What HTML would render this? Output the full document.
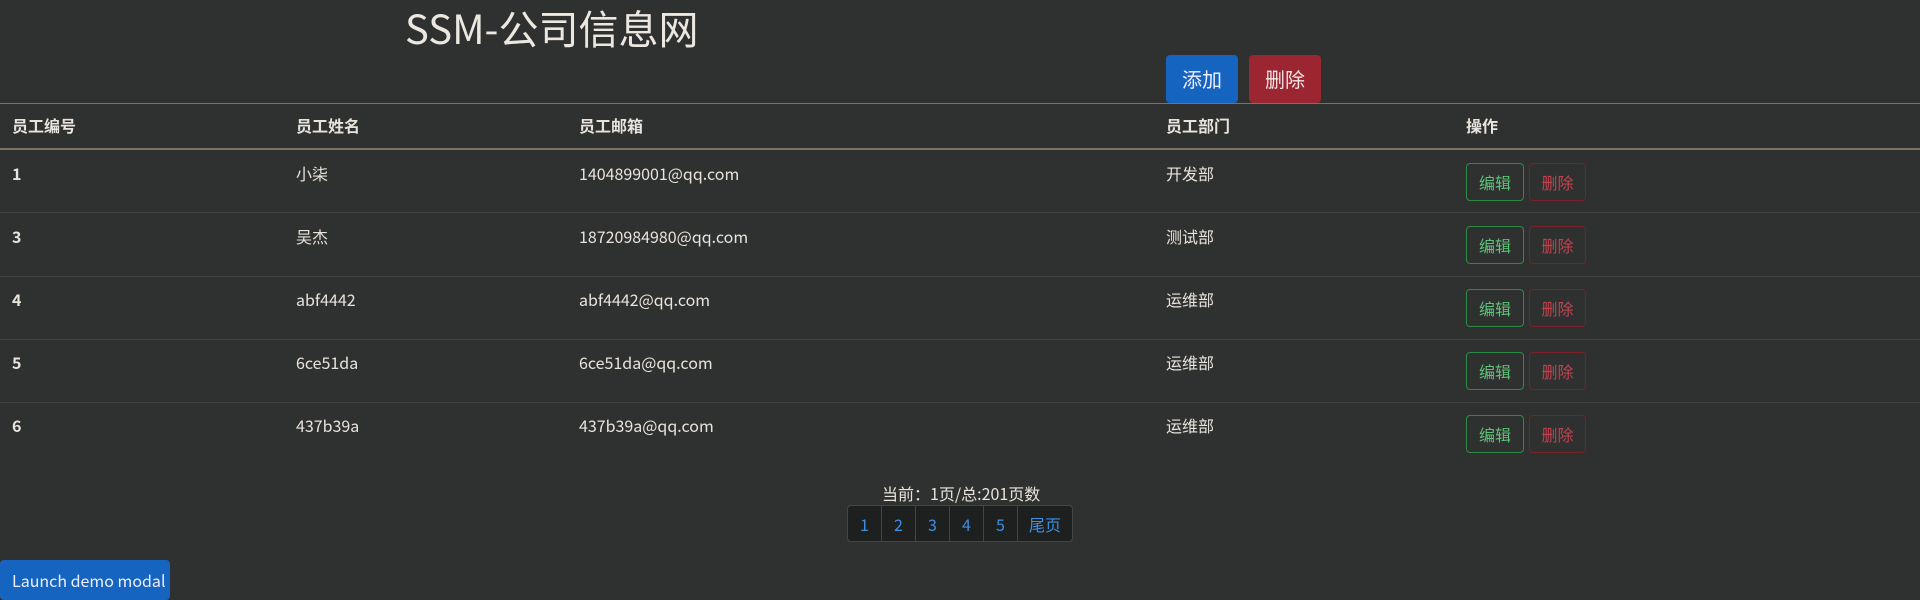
<!DOCTYPE html>
<html><head><meta charset="utf-8"><style>
*{box-sizing:border-box;margin:0;padding:0}
body{width:1920px;height:594px;background:#2f3030;color:#e8e4dc;font-family:"Noto Sans CJK SC","Liberation Sans",sans-serif;font-size:16px;line-height:20px;position:relative;overflow:hidden}
.a{position:absolute;white-space:nowrap}
h1{position:absolute;left:405px;top:0px;font-size:40px;line-height:54px;font-weight:400;color:#ece8e0}
.btn{position:absolute;border-radius:4px;display:flex;align-items:center;justify-content:center}
.line{position:absolute;left:0;width:1920px}
.th{font-weight:bold;top:115px}
.ed{border:1px solid #2e8b45;color:#5cc275}
.dl{border:1px solid #7a2029;color:#c0444f}
.pg{position:absolute;left:847px;top:505px;width:226px;height:37px;border:1px solid #444;border-radius:4px;background:#1e1f1f;display:flex}
.pg div{border-right:1px solid #444;color:#3d8fe0;display:flex;align-items:center;justify-content:center;width:34px}
.pg div:last-child{border:none;flex:1}
</style></head><body>
<h1>SSM-公司信息网</h1>
<div class="btn" style="left:1166px;top:55px;width:72px;height:48px;background:#1565c0;color:#eef;font-size:20px">添加</div>
<div class="btn" style="left:1249px;top:55px;width:72px;height:48px;background:#9b2530;color:#f3e6e6;font-size:20px">删除</div>
<div class="line" style="top:103px;height:1px;background:#7d7262"></div>
<div class="line" style="top:148px;height:2px;background:#7d7262"></div>
<div class="a th" style="left:12px">员工编号</div>
<div class="a th" style="left:296px">员工姓名</div>
<div class="a th" style="left:579px">员工邮箱</div>
<div class="a th" style="left:1166px">员工部门</div>
<div class="a th" style="left:1466px">操作</div>

<div class="line" style="top:212px;height:1px;background:#414241"></div>
<div class="line" style="top:276px;height:1px;background:#414241"></div>
<div class="line" style="top:339px;height:1px;background:#414241"></div>
<div class="line" style="top:402px;height:1px;background:#414241"></div>

<div class="a" style="left:12px;top:163px;font-weight:bold">1</div>
<div class="a" style="left:296px;top:163px">小柒</div>
<div class="a" style="left:579px;top:163px">1404899001@qq.com</div>
<div class="a" style="left:1166px;top:163px">开发部</div>
<div class="btn ed" style="left:1466px;top:163px;width:58px;height:38px">编辑</div>
<div class="btn dl" style="left:1529px;top:163px;width:57px;height:38px">删除</div>

<div class="a" style="left:12px;top:226px;font-weight:bold">3</div>
<div class="a" style="left:296px;top:226px">吴杰</div>
<div class="a" style="left:579px;top:226px">18720984980@qq.com</div>
<div class="a" style="left:1166px;top:226px">测试部</div>
<div class="btn ed" style="left:1466px;top:226px;width:58px;height:38px">编辑</div>
<div class="btn dl" style="left:1529px;top:226px;width:57px;height:38px">删除</div>

<div class="a" style="left:12px;top:289px;font-weight:bold">4</div>
<div class="a" style="left:296px;top:289px">abf4442</div>
<div class="a" style="left:579px;top:289px">abf4442@qq.com</div>
<div class="a" style="left:1166px;top:289px">运维部</div>
<div class="btn ed" style="left:1466px;top:289px;width:58px;height:38px">编辑</div>
<div class="btn dl" style="left:1529px;top:289px;width:57px;height:38px">删除</div>

<div class="a" style="left:12px;top:352px;font-weight:bold">5</div>
<div class="a" style="left:296px;top:352px">6ce51da</div>
<div class="a" style="left:579px;top:352px">6ce51da@qq.com</div>
<div class="a" style="left:1166px;top:352px">运维部</div>
<div class="btn ed" style="left:1466px;top:352px;width:58px;height:38px">编辑</div>
<div class="btn dl" style="left:1529px;top:352px;width:57px;height:38px">删除</div>

<div class="a" style="left:12px;top:415px;font-weight:bold">6</div>
<div class="a" style="left:296px;top:415px">437b39a</div>
<div class="a" style="left:579px;top:415px">437b39a@qq.com</div>
<div class="a" style="left:1166px;top:415px">运维部</div>
<div class="btn ed" style="left:1466px;top:415px;width:58px;height:38px">编辑</div>
<div class="btn dl" style="left:1529px;top:415px;width:57px;height:38px">删除</div>

<div class="a" style="left:882px;top:483px">当前：1页/总:201页数</div>
<div class="pg"><div>1</div><div>2</div><div>3</div><div>4</div><div>5</div><div>尾页</div></div>

<div class="btn" style="left:0;top:560px;width:170px;height:40px;background:#1565c0;color:#eef;font-size:16px;border-radius:4px;align-items:flex-start;justify-content:flex-start;padding:10px 0 0 12px">Launch demo modal</div>
</body></html>
